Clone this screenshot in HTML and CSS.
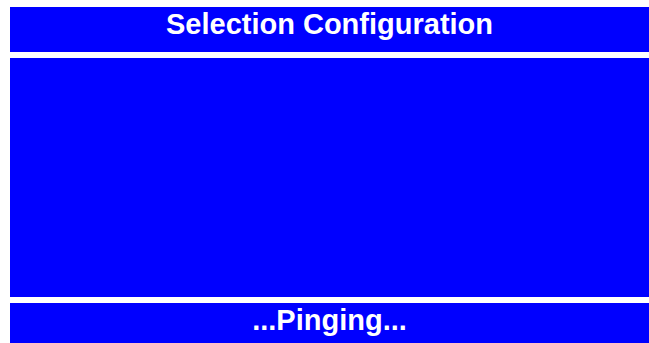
FILE: index.html
```html
<!DOCTYPE html>
<html lang="en">
<head>
	<meta charset="UTF-8">
	<title>Selection Configuration</title>
	<link rel="stylesheet" href="styles.css">
</head>
<body>
	<div class="screen">
		<div class="bar title">Selection Configuration</div>
		<div class="panel"></div>
		<div class="bar status">...Pinging...</div>
	</div>
</body>
</html>
```

FILE: styles.css
```css
* {
	margin: 0;
	padding: 0;
}
body {
	background-color: #fff;
	font-family: "Liberation Sans", Arial, sans-serif;
	overflow: hidden;
}
.screen {
	display: flex;
	flex-direction: column;
	gap: 6px;
	padding: 7px 0 0 10px;
	width: 639px;
}
.bar {
	height: 45px;
	padding-top: 1px;
	box-sizing: border-box;
	background-color: #0000ff;
	color: #fff;
	font-size: 29px;
	font-weight: bold;
	text-align: center;
}
.panel {
	height: 239px;
	background-color: #0000ff;
}
```
